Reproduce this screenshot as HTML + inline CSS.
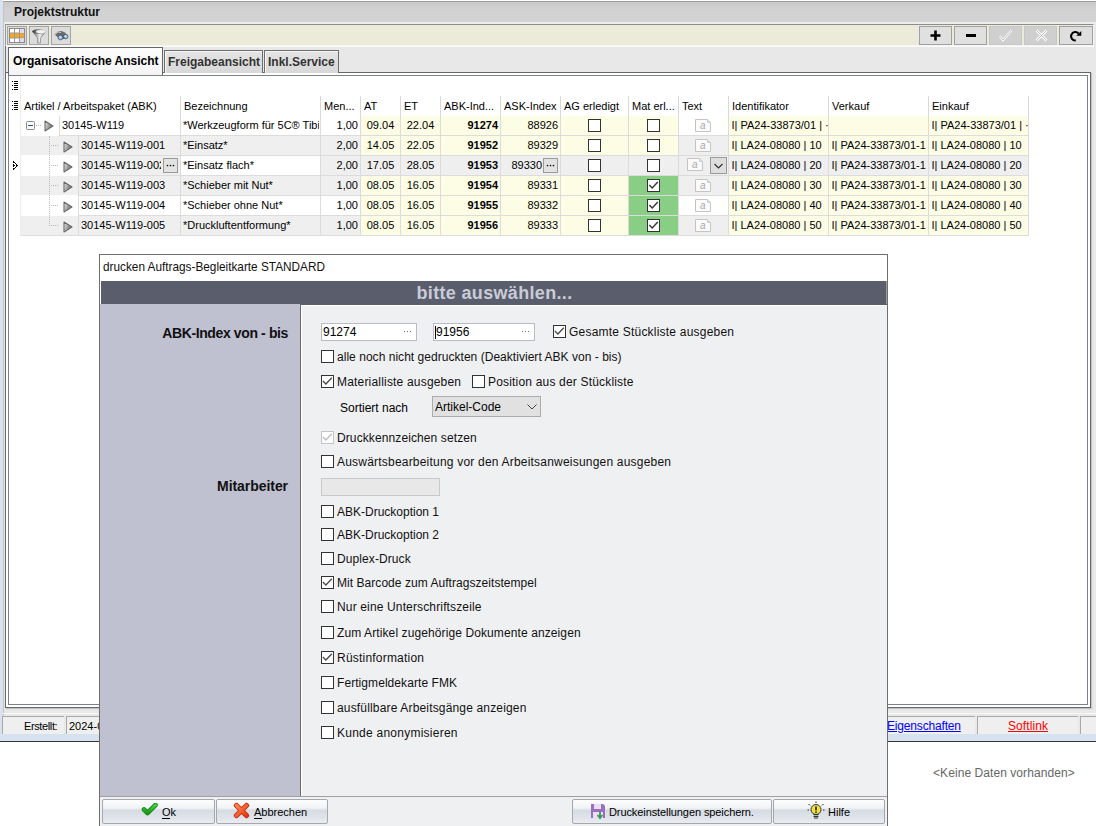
<!DOCTYPE html>
<html><head><meta charset="utf-8">
<style>
*{box-sizing:border-box;margin:0;padding:0}
html,body{width:1096px;height:826px;overflow:hidden;background:#fff;font-family:"Liberation Sans",sans-serif;color:#000;position:relative}
.a{position:absolute}
.t11{font-size:11px;line-height:13px;white-space:nowrap}
.t12{font-size:12px;line-height:14px;white-space:nowrap}
.b{font-weight:bold}
.vl{position:absolute;width:1px;background:#d9d9d9}
.hl{position:absolute;height:1px;background:#d9d9d9}
.cb{position:absolute;width:13px;height:13px;border:1px solid #333;background:#fff}
.cbk::after{content:"";position:absolute;left:3px;top:0px;width:4px;height:8px;border:solid #222;border-width:0 1.5px 1.5px 0;transform:rotate(45deg)}
.doc{position:absolute;width:16px;height:12px;border:1px solid #c8c8c8;background:#fff;font-size:9px;font-style:italic;color:#b0b0b0;text-align:center;line-height:10px}
</style></head><body>

<!-- left light strip -->
<div class="a" style="left:0;top:0;width:3px;height:741px;background:#d8e3ef"></div>
<!-- main window frame -->
<div class="a" style="left:3px;top:1px;width:1093px;height:733px;background:#e8e8e8;border-left:1px solid #c4c4c4;border-top:1px solid #9c9c9c"></div>
<!-- title bar -->
<div class="a" style="left:4px;top:2px;width:1092px;height:20px;background:linear-gradient(#c9c9c9,#d2d2d2 40%,#d2d2d2)"></div>
<div class="a t12 b" style="left:14px;top:5px;color:#111">Projektstruktur</div>
<div class="a" style="left:4px;top:22px;width:1092px;height:2px;background:#ededf0"></div>
<!-- toolbar -->
<div class="a" style="left:5px;top:24px;width:1089px;height:22px;background:#ecead9;border-top:1px solid #8c8c8c;border-left:1px solid #9a9a9a;border-right:1px solid #f4f4f4;border-bottom:1px solid #f6f6f6"></div>
<div class="a" style="left:7px;top:26px;width:20px;height:19px;background:#dcdcdc;border:1px solid #a4a4a4"></div>
<svg class="a" style="left:9px;top:28px" width="16" height="15" viewBox="0 0 16 15"><rect x="0.5" y="0.5" width="15" height="14" fill="#fff" stroke="#888"/><rect x="1" y="5" width="14" height="5" fill="#f5a623"/><path d="M5.5 0.5 V14.5 M10.5 0.5 V14.5 M0.5 5 H15.5 M0.5 10 H15.5" stroke="#999" stroke-width="1"/><rect x="11" y="1" width="4" height="4" fill="#e0dcf8"/><rect x="11" y="10.5" width="4" height="3.5" fill="#e0dcf8"/></svg>
<div class="a" style="left:29px;top:26px;width:20px;height:19px;background:#dcdcdc;border:1px solid #a4a4a4"></div>
<svg class="a" style="left:31px;top:28px" width="16" height="16" viewBox="0 0 16 16"><defs><linearGradient id="fgA" x1="0" y1="0" x2="1" y2="0"><stop offset="0" stop-color="#3a3a3a"/><stop offset="0.5" stop-color="#9a9a9a"/><stop offset="1" stop-color="#dcdcdc"/></linearGradient><linearGradient id="fgB" x1="0" y1="0" x2="1" y2="0"><stop offset="0" stop-color="#555"/><stop offset="0.55" stop-color="#f0f0f0"/><stop offset="1" stop-color="#6a6a6a"/></linearGradient></defs><path d="M1.5 3.5 L6.5 10 V15 H9.5 V10 L15 3.5 Z" fill="url(#fgB)" stroke="#777" stroke-width="0.6"/><ellipse cx="8.2" cy="3.5" rx="6.8" ry="2.5" fill="url(#fgA)"/><ellipse cx="9.6" cy="3.6" rx="4.6" ry="1.6" fill="#f2f2f2"/></svg>
<div class="a" style="left:51px;top:26px;width:20px;height:19px;background:#dcdcdc;border:1px solid #a4a4a4"></div>
<svg class="a" style="left:53px;top:29px" width="16" height="13" viewBox="0 0 16 13"><path d="M1.5 5.5 L5 2.5 L8.5 2 L12 3.5 L14.5 7 L12 10 L7 10 Z" fill="#6a6a6a"/><path d="M2 5.5 L5 3 L8 3.5" stroke="#c8c8c8" stroke-width="1" fill="none"/><circle cx="7.5" cy="8.5" r="2.4" fill="#8cc4f4" stroke="#444" stroke-width="0.7"/><circle cx="12.8" cy="7.6" r="2.2" fill="#8cc4f4" stroke="#444" stroke-width="0.7"/><circle cx="7" cy="8" r="0.8" fill="#e8f4ff"/><circle cx="12.3" cy="7.1" r="0.8" fill="#e8f4ff"/></svg>
<div class="a" style="left:919px;top:26px;width:33px;height:19px;background:#e0e0e0;border:1px solid #a0a0a0"></div>
<svg class="a" style="left:930px;top:30px" width="11" height="11" viewBox="0 0 11 11"><path d="M5.5 0.5 V10.5 M0.5 5.5 H10.5" stroke="#000" stroke-width="2.6"/></svg>
<div class="a" style="left:954px;top:26px;width:33px;height:19px;background:#e0e0e0;border:1px solid #a0a0a0"></div>
<div class="a" style="left:966px;top:34px;width:10px;height:3px;background:#000"></div>
<div class="a" style="left:989px;top:26px;width:33px;height:19px;background:#cfcfcf;border:1px solid #c6c6c6"></div>
<svg class="a" style="left:998px;top:29px" width="15" height="13" viewBox="0 0 15 13"><path d="M1.5 7 L5 11 L13.5 1.5" fill="none" stroke="#fff" stroke-width="2.4"/><path d="M1.5 7 L5 11 L13.5 1.5" fill="none" stroke="#bdbdbd" stroke-width="1"/></svg>
<div class="a" style="left:1024px;top:26px;width:33px;height:19px;background:#cfcfcf;border:1px solid #c6c6c6"></div>
<svg class="a" style="left:1035px;top:29px" width="13" height="13" viewBox="0 0 13 13"><path d="M1.5 1.5 L11.5 11.5 M11.5 1.5 L1.5 11.5" fill="none" stroke="#fff" stroke-width="2.6"/><path d="M1.5 1.5 L11.5 11.5 M11.5 1.5 L1.5 11.5" fill="none" stroke="#bdbdbd" stroke-width="1"/></svg>
<div class="a" style="left:1059px;top:26px;width:34px;height:19px;background:#dedede;border:1px solid #a0a0a0"></div>
<svg class="a" style="left:1070px;top:30px" width="13" height="12" viewBox="0 0 13 12"><path d="M5.8 10.4 A4.2 4.2 0 1 1 8.6 3.6" fill="none" stroke="#000" stroke-width="2.1"/><path d="M6.2 5.8 L11.3 5.8 L11.3 0.9 Z" fill="#000"/></svg>

<!-- tab strip -->
<div class="a" style="left:5px;top:46px;width:1089px;height:27px;background:#e8e8e8;border-top:1px solid #fafafa"></div>
<div class="a" style="left:5px;top:46px;width:1px;height:662px;background:#707070"></div>
<!-- content panel -->
<div class="a" style="left:5px;top:72px;width:1086px;height:636px;background:#fff;border:1px solid #666;box-shadow:1px 1px 1px rgba(0,0,0,0.15)"></div>
<div class="a" style="left:8px;top:75px;width:1080px;height:630px;background:#fff;border:1px solid #7a8290"></div>
<div class="a" style="left:8px;top:47px;width:155px;height:28px;background:linear-gradient(#fcfcfc,#f4f4f4);border:1px solid #666;border-bottom:none"></div>
<div class="a" style="left:5px;top:72px;width:3px;height:1px;background:#666"></div>
<div class="a t12 b" style="left:13px;top:54px">Organisatorische Ansicht</div>
<div class="a" style="left:164px;top:50px;width:99px;height:23px;background:linear-gradient(#e4e4e4,#d8d8d8);border:1px solid #6e6e6e;border-bottom:none;box-shadow:inset 1px 1px 0 #f6f6f6"></div>
<div class="a t12 b" style="left:168px;top:55px;color:#333">Freigabeansicht</div>
<div class="a" style="left:264px;top:50px;width:75px;height:23px;background:linear-gradient(#e4e4e4,#d8d8d8);border:1px solid #6e6e6e;border-bottom:none;box-shadow:inset 1px 1px 0 #f6f6f6"></div>
<div class="a t12 b" style="left:268px;top:55px;color:#333">Inkl.Service</div>

<!-- status bar -->
<div class="a" style="left:3px;top:713px;width:1093px;height:1px;background:#f8f8f8"></div>
<div class="a" style="left:2px;top:716px;width:62px;height:18px;background:#efefef;border-top:1px solid #aaa;border-left:1px solid #aaa"></div>
<div class="a t12" style="left:24px;top:719px;font-size:11px;letter-spacing:-0.38px">Erstellt:</div>
<div class="a" style="left:66px;top:716px;width:40px;height:18px;background:#efefef;border-top:1px solid #aaa;border-left:1px solid #aaa"></div>
<div class="a t12" style="left:69px;top:719px;font-size:11px">2024-0</div>
<div class="a" style="left:887px;top:716px;width:88px;height:18px;background:#efefef;border-top:1px solid #aaa"></div>
<div class="a t12" style="left:887px;top:719px;color:#0000ff;text-decoration:underline;letter-spacing:-0.17px">Eigenschaften</div>
<div class="a" style="left:977px;top:716px;width:101px;height:18px;background:#efefef;border-top:1px solid #aaa;border-left:1px solid #aaa"></div>
<div class="a t12" style="left:1008px;top:719px;color:#ff0000;text-decoration:underline;letter-spacing:0.09px">Softlink</div>
<div class="a" style="left:1080px;top:716px;width:16px;height:18px;background:#efefef;border-top:1px solid #aaa;border-left:1px solid #aaa"></div>
<div class="a" style="left:0;top:734px;width:1096px;height:7px;background:#d6e2ee"></div>
<div class="a" style="left:0;top:741px;width:1096px;height:1px;background:#333"></div>
<div class="a t12" style="left:933px;top:766px;color:#666;letter-spacing:0.07px">&lt;Keine Daten vorhanden&gt;</div>


<div class="vl" style="left:180px;top:96px;height:20px"></div>
<div class="vl" style="left:320px;top:96px;height:20px"></div>
<div class="vl" style="left:360px;top:96px;height:20px"></div>
<div class="vl" style="left:400px;top:96px;height:20px"></div>
<div class="vl" style="left:440px;top:96px;height:20px"></div>
<div class="vl" style="left:500px;top:96px;height:20px"></div>
<div class="vl" style="left:560px;top:96px;height:20px"></div>
<div class="vl" style="left:628px;top:96px;height:20px"></div>
<div class="vl" style="left:678px;top:96px;height:20px"></div>
<div class="vl" style="left:728px;top:96px;height:20px"></div>
<div class="vl" style="left:828px;top:96px;height:20px"></div>
<div class="vl" style="left:928px;top:96px;height:20px"></div>
<div class="vl" style="left:1028px;top:96px;height:20px"></div>
<div class="a" style="left:14px;top:81px;width:4px;height:1px;background:#000"></div><div class="a" style="left:14px;top:83px;width:4px;height:1px;background:#000"></div><div class="a" style="left:14px;top:85px;width:4px;height:1px;background:#000"></div><div class="a" style="left:14px;top:87px;width:4px;height:1px;background:#000"></div><div class="a" style="left:14px;top:89px;width:4px;height:1px;background:#000"></div><div class="a" style="left:12px;top:81px;width:1px;height:1px;background:#000"></div><div class="a" style="left:12px;top:85px;width:1px;height:1px;background:#000"></div><div class="a" style="left:12px;top:89px;width:1px;height:1px;background:#000"></div>
<div class="a" style="left:14px;top:101px;width:4px;height:1px;background:#000"></div><div class="a" style="left:14px;top:103px;width:4px;height:1px;background:#000"></div><div class="a" style="left:14px;top:105px;width:4px;height:1px;background:#000"></div><div class="a" style="left:14px;top:107px;width:4px;height:1px;background:#000"></div><div class="a" style="left:14px;top:109px;width:4px;height:1px;background:#000"></div><div class="a" style="left:12px;top:101px;width:1px;height:1px;background:#000"></div><div class="a" style="left:12px;top:105px;width:1px;height:1px;background:#000"></div><div class="a" style="left:12px;top:109px;width:1px;height:1px;background:#000"></div>
<div class="vl" style="left:20px;top:76px;height:160px;background:#ececec"></div>
<div class="a t11" style="left:24px;top:100px">Artikel / Arbeitspaket (ABK)</div>
<div class="a t11" style="left:184px;top:100px">Bezeichnung</div>
<div class="a t11" style="left:324px;top:100px">Men...</div>
<div class="a t11" style="left:364px;top:100px">AT</div>
<div class="a t11" style="left:404px;top:100px">ET</div>
<div class="a t11" style="left:444px;top:100px">ABK-Ind...</div>
<div class="a t11" style="left:504px;top:100px">ASK-Index</div>
<div class="a t11" style="left:564px;top:100px">AG erledigt</div>
<div class="a t11" style="left:632px;top:100px">Mat erl...</div>
<div class="a t11" style="left:682px;top:100px">Text</div>
<div class="a t11" style="left:732px;top:100px">Identifikator</div>
<div class="a t11" style="left:832px;top:100px">Verkauf</div>
<div class="a t11" style="left:932px;top:100px">Einkauf</div>
<div class="a" style="left:21px;top:116px;width:1007px;height:19px;background:#ffffff"></div>
<div class="a" style="left:361px;top:116px;width:199px;height:19px;background:#fdfde6"></div>
<div class="a" style="left:561px;top:116px;width:67px;height:19px;background:#fdfde6"></div>
<div class="a" style="left:629px;top:116px;width:49px;height:19px;background:#fdfde6"></div>
<div class="a" style="left:729px;top:116px;width:299px;height:19px;background:#fdfde6"></div>
<div class="hl" style="left:59px;top:135px;width:970px;background:#dcdcdc"></div>
<div class="vl" style="left:59px;top:116px;height:20px;background:#dcdcdc"></div>
<div class="vl" style="left:180px;top:116px;height:20px;background:#dcdcdc"></div>
<div class="vl" style="left:320px;top:116px;height:20px;background:#dcdcdc"></div>
<div class="vl" style="left:360px;top:116px;height:20px;background:#dcdcdc"></div>
<div class="vl" style="left:400px;top:116px;height:20px;background:#dcdcdc"></div>
<div class="vl" style="left:440px;top:116px;height:20px;background:#dcdcdc"></div>
<div class="vl" style="left:500px;top:116px;height:20px;background:#dcdcdc"></div>
<div class="vl" style="left:560px;top:116px;height:20px;background:#dcdcdc"></div>
<div class="vl" style="left:628px;top:116px;height:20px;background:#dcdcdc"></div>
<div class="vl" style="left:678px;top:116px;height:20px;background:#dcdcdc"></div>
<div class="vl" style="left:728px;top:116px;height:20px;background:#dcdcdc"></div>
<div class="vl" style="left:828px;top:116px;height:20px;background:#dcdcdc"></div>
<div class="vl" style="left:928px;top:116px;height:20px;background:#dcdcdc"></div>
<div class="vl" style="left:1028px;top:116px;height:20px;background:#dcdcdc"></div>
<div class="a" style="left:26px;top:121px;width:9px;height:9px;border:1px solid #8a8a8a;border-radius:1.5px;background:#fafafa"></div>
<div class="a" style="left:28px;top:125px;width:5px;height:1px;background:#3050a0"></div>
<div class="a" style="left:36px;top:125px;width:5px;height:1px;border-top:1px dotted #bbb"></div>
<svg class="a" style="left:44px;top:120px" width="10" height="12" viewBox="0 0 10 12"><defs><linearGradient id="tg" x1="0" y1="0" x2="1" y2="0.3"><stop offset="0" stop-color="#f4f4f4"/><stop offset="0.35" stop-color="#b8b8b8"/><stop offset="1" stop-color="#6a6a6a"/></linearGradient></defs><path d="M1 1 L9 6 L1 11 Z" fill="url(#tg)" stroke="#6a6a6a" stroke-width="1.1" stroke-linejoin="round"/></svg>
<div class="a t11" style="left:62px;top:119px">30145-W119</div>
<div class="a t11" style="left:183px;top:119px;width:136px;overflow:hidden">*Werkzeugform für 5C® Tibi</div>
<div class="a t11" style="left:321px;top:119px;width:37px;text-align:right">1,00</div>
<div class="a t11" style="left:361px;top:119px;width:39px;text-align:center">09.04</div>
<div class="a t11" style="left:401px;top:119px;width:39px;text-align:center">22.04</div>
<div class="a t11 b" style="left:441px;top:119px;width:57px;text-align:right">91274</div>
<div class="a t11" style="left:501px;top:119px;width:57px;text-align:right">88926</div>
<div class="cb" style="left:588px;top:119px"></div>
<div class="cb" style="left:647px;top:119px"></div>
<svg class="a" style="left:695px;top:119px" width="17" height="14" viewBox="0 0 17 14"><path d="M0.5 0.5 H12.5 L15.5 3.5 V12.5 H0.5 Z" fill="#fbfbfb" stroke="#c4c4c4" stroke-width="1"/><path d="M12.5 0.5 V3.5 H15.5" fill="#ddd" stroke="#c8c8c8" stroke-width="0.8"/><text x="7.8" y="10.3" font-family="Liberation Sans" font-style="italic" font-size="10" fill="#a8a8a8" text-anchor="middle">a</text></svg>
<div class="a t11" style="left:731.5px;top:119px;width:96px;overflow:hidden">I| PA24-33873/01 | ·</div>
<div class="a t11" style="left:831.5px;top:119px;width:96px;overflow:hidden"></div>
<div class="a t11" style="left:931.5px;top:119px;width:96px;overflow:hidden">I| PA24-33873/01 | ·</div>
<div class="a" style="left:21px;top:136px;width:1007px;height:19px;background:#efefef"></div>
<div class="a" style="left:361px;top:136px;width:199px;height:19px;background:#fdfde6"></div>
<div class="a" style="left:561px;top:136px;width:67px;height:19px;background:#fdfde6"></div>
<div class="a" style="left:629px;top:136px;width:49px;height:19px;background:#fdfde6"></div>
<div class="a" style="left:729px;top:136px;width:299px;height:19px;background:#fdfde6"></div>
<div class="hl" style="left:78px;top:155px;width:951px;background:#dcdcdc"></div>
<div class="vl" style="left:78px;top:136px;height:20px;background:#dcdcdc"></div>
<div class="vl" style="left:180px;top:136px;height:20px;background:#dcdcdc"></div>
<div class="vl" style="left:320px;top:136px;height:20px;background:#dcdcdc"></div>
<div class="vl" style="left:360px;top:136px;height:20px;background:#dcdcdc"></div>
<div class="vl" style="left:400px;top:136px;height:20px;background:#dcdcdc"></div>
<div class="vl" style="left:440px;top:136px;height:20px;background:#dcdcdc"></div>
<div class="vl" style="left:500px;top:136px;height:20px;background:#dcdcdc"></div>
<div class="vl" style="left:560px;top:136px;height:20px;background:#dcdcdc"></div>
<div class="vl" style="left:628px;top:136px;height:20px;background:#dcdcdc"></div>
<div class="vl" style="left:678px;top:136px;height:20px;background:#dcdcdc"></div>
<div class="vl" style="left:728px;top:136px;height:20px;background:#dcdcdc"></div>
<div class="vl" style="left:828px;top:136px;height:20px;background:#dcdcdc"></div>
<div class="vl" style="left:928px;top:136px;height:20px;background:#dcdcdc"></div>
<div class="vl" style="left:1028px;top:136px;height:20px;background:#dcdcdc"></div>
<div class="a" style="left:51px;top:145px;width:7px;height:1px;border-top:1px dotted #bbb"></div>
<svg class="a" style="left:63px;top:141px" width="10" height="12" viewBox="0 0 10 12"><defs><linearGradient id="tg" x1="0" y1="0" x2="1" y2="0.3"><stop offset="0" stop-color="#f4f4f4"/><stop offset="0.35" stop-color="#b8b8b8"/><stop offset="1" stop-color="#6a6a6a"/></linearGradient></defs><path d="M1 1 L9 6 L1 11 Z" fill="url(#tg)" stroke="#6a6a6a" stroke-width="1.1" stroke-linejoin="round"/></svg>
<div class="a t11" style="left:81px;top:139px">30145-W119-001</div>
<div class="a t11" style="left:183px;top:139px;width:136px;overflow:hidden">*Einsatz*</div>
<div class="a t11" style="left:321px;top:139px;width:37px;text-align:right">2,00</div>
<div class="a t11" style="left:361px;top:139px;width:39px;text-align:center">14.05</div>
<div class="a t11" style="left:401px;top:139px;width:39px;text-align:center">22.05</div>
<div class="a t11 b" style="left:441px;top:139px;width:57px;text-align:right">91952</div>
<div class="a t11" style="left:501px;top:139px;width:57px;text-align:right">89329</div>
<div class="cb" style="left:588px;top:139px"></div>
<div class="cb" style="left:647px;top:139px"></div>
<svg class="a" style="left:695px;top:139px" width="17" height="14" viewBox="0 0 17 14"><path d="M0.5 0.5 H12.5 L15.5 3.5 V12.5 H0.5 Z" fill="#fbfbfb" stroke="#c4c4c4" stroke-width="1"/><path d="M12.5 0.5 V3.5 H15.5" fill="#ddd" stroke="#c8c8c8" stroke-width="0.8"/><text x="7.8" y="10.3" font-family="Liberation Sans" font-style="italic" font-size="10" fill="#a8a8a8" text-anchor="middle">a</text></svg>
<div class="a t11" style="left:731.5px;top:139px;width:96px;overflow:hidden">I| LA24-08080 | 10</div>
<div class="a t11" style="left:831.5px;top:139px;width:96px;overflow:hidden">I| PA24-33873/01-1</div>
<div class="a t11" style="left:931.5px;top:139px;width:96px;overflow:hidden">I| LA24-08080 | 10</div>
<div class="a" style="left:21px;top:156px;width:1007px;height:19px;background:#efefef"></div>
<div class="a" style="left:181px;top:156px;width:139px;height:19px;background:#fff"></div>
<div class="a" style="left:21px;top:156px;width:57px;height:19px;background:#fff"></div>
<div class="hl" style="left:78px;top:175px;width:951px;background:#dcdcdc"></div>
<div class="vl" style="left:78px;top:156px;height:20px;background:#dcdcdc"></div>
<div class="vl" style="left:180px;top:156px;height:20px;background:#dcdcdc"></div>
<div class="vl" style="left:320px;top:156px;height:20px;background:#dcdcdc"></div>
<div class="vl" style="left:360px;top:156px;height:20px;background:#dcdcdc"></div>
<div class="vl" style="left:400px;top:156px;height:20px;background:#dcdcdc"></div>
<div class="vl" style="left:440px;top:156px;height:20px;background:#dcdcdc"></div>
<div class="vl" style="left:500px;top:156px;height:20px;background:#dcdcdc"></div>
<div class="vl" style="left:560px;top:156px;height:20px;background:#dcdcdc"></div>
<div class="vl" style="left:628px;top:156px;height:20px;background:#dcdcdc"></div>
<div class="vl" style="left:678px;top:156px;height:20px;background:#dcdcdc"></div>
<div class="vl" style="left:728px;top:156px;height:20px;background:#dcdcdc"></div>
<div class="vl" style="left:828px;top:156px;height:20px;background:#dcdcdc"></div>
<div class="vl" style="left:928px;top:156px;height:20px;background:#dcdcdc"></div>
<div class="vl" style="left:1028px;top:156px;height:20px;background:#dcdcdc"></div>
<div class="a" style="left:51px;top:165px;width:7px;height:1px;border-top:1px dotted #bbb"></div>
<svg class="a" style="left:63px;top:161px" width="10" height="12" viewBox="0 0 10 12"><defs><linearGradient id="tg" x1="0" y1="0" x2="1" y2="0.3"><stop offset="0" stop-color="#f4f4f4"/><stop offset="0.35" stop-color="#b8b8b8"/><stop offset="1" stop-color="#6a6a6a"/></linearGradient></defs><path d="M1 1 L9 6 L1 11 Z" fill="url(#tg)" stroke="#6a6a6a" stroke-width="1.1" stroke-linejoin="round"/></svg>
<div class="a t11" style="left:81px;top:159px;width:80px;overflow:hidden">30145-W119-002</div>
<div class="a" style="left:163px;top:158px;width:15px;height:15px;background:#e2e2e2;border:1px solid #9a9a9a"></div><svg class="a" style="left:163px;top:158px" width="15" height="15"><circle cx="4.5" cy="7.5" r="0.85" fill="#111"/><circle cx="7.5" cy="7.5" r="0.85" fill="#111"/><circle cx="10.5" cy="7.5" r="0.85" fill="#111"/></svg>
<div class="a t11" style="left:183px;top:159px;width:136px;overflow:hidden">*Einsatz flach*</div>
<div class="a t11" style="left:321px;top:159px;width:37px;text-align:right">2,00</div>
<div class="a t11" style="left:361px;top:159px;width:39px;text-align:center">17.05</div>
<div class="a t11" style="left:401px;top:159px;width:39px;text-align:center">28.05</div>
<div class="a t11 b" style="left:441px;top:159px;width:57px;text-align:right">91953</div>
<div class="a t11" style="left:501px;top:159px;width:41px;text-align:right">89330</div>
<div class="a" style="left:543px;top:158px;width:15px;height:15px;background:#e2e2e2;border:1px solid #9a9a9a"></div><svg class="a" style="left:543px;top:158px" width="15" height="15"><circle cx="4.5" cy="7.5" r="0.85" fill="#111"/><circle cx="7.5" cy="7.5" r="0.85" fill="#111"/><circle cx="10.5" cy="7.5" r="0.85" fill="#111"/></svg>
<div class="cb" style="left:588px;top:159px"></div>
<div class="cb" style="left:647px;top:159px"></div>
<svg class="a" style="left:687px;top:158px" width="17" height="14" viewBox="0 0 17 14"><path d="M0.5 0.5 H12.5 L15.5 3.5 V12.5 H0.5 Z" fill="#fbfbfb" stroke="#c4c4c4" stroke-width="1"/><path d="M12.5 0.5 V3.5 H15.5" fill="#ddd" stroke="#c8c8c8" stroke-width="0.8"/><text x="7.8" y="10.3" font-family="Liberation Sans" font-style="italic" font-size="10" fill="#a8a8a8" text-anchor="middle">a</text></svg>
<div class="a" style="left:710px;top:157px;width:17px;height:17px;background:#dedede;border:1px solid #9a9a9a"></div>
<svg class="a" style="left:713px;top:163px" width="11" height="7" viewBox="0 0 11 7"><path d="M1.5 1 L5.5 5 L9.5 1" fill="none" stroke="#333" stroke-width="1.2"/></svg>
<div class="a t11" style="left:731.5px;top:159px;width:96px;overflow:hidden">I| LA24-08080 | 20</div>
<div class="a t11" style="left:831.5px;top:159px;width:96px;overflow:hidden">I| PA24-33873/01-1</div>
<div class="a t11" style="left:931.5px;top:159px;width:96px;overflow:hidden">I| LA24-08080 | 20</div>
<div class="a" style="left:21px;top:176px;width:1007px;height:19px;background:#efefef"></div>
<div class="a" style="left:361px;top:176px;width:199px;height:19px;background:#fdfde6"></div>
<div class="a" style="left:561px;top:176px;width:67px;height:19px;background:#fdfde6"></div>
<div class="a" style="left:629px;top:176px;width:49px;height:19px;background:#fdfde6"></div>
<div class="a" style="left:729px;top:176px;width:299px;height:19px;background:#fdfde6"></div>
<div class="a" style="left:629px;top:176px;width:49px;height:20px;background:#88ce85"></div>
<div class="hl" style="left:78px;top:195px;width:951px;background:#dcdcdc"></div>
<div class="vl" style="left:78px;top:176px;height:20px;background:#dcdcdc"></div>
<div class="vl" style="left:180px;top:176px;height:20px;background:#dcdcdc"></div>
<div class="vl" style="left:320px;top:176px;height:20px;background:#dcdcdc"></div>
<div class="vl" style="left:360px;top:176px;height:20px;background:#dcdcdc"></div>
<div class="vl" style="left:400px;top:176px;height:20px;background:#dcdcdc"></div>
<div class="vl" style="left:440px;top:176px;height:20px;background:#dcdcdc"></div>
<div class="vl" style="left:500px;top:176px;height:20px;background:#dcdcdc"></div>
<div class="vl" style="left:560px;top:176px;height:20px;background:#dcdcdc"></div>
<div class="vl" style="left:628px;top:176px;height:20px;background:#dcdcdc"></div>
<div class="vl" style="left:678px;top:176px;height:20px;background:#dcdcdc"></div>
<div class="vl" style="left:728px;top:176px;height:20px;background:#dcdcdc"></div>
<div class="vl" style="left:828px;top:176px;height:20px;background:#dcdcdc"></div>
<div class="vl" style="left:928px;top:176px;height:20px;background:#dcdcdc"></div>
<div class="vl" style="left:1028px;top:176px;height:20px;background:#dcdcdc"></div>
<div class="a" style="left:51px;top:185px;width:7px;height:1px;border-top:1px dotted #bbb"></div>
<svg class="a" style="left:63px;top:181px" width="10" height="12" viewBox="0 0 10 12"><defs><linearGradient id="tg" x1="0" y1="0" x2="1" y2="0.3"><stop offset="0" stop-color="#f4f4f4"/><stop offset="0.35" stop-color="#b8b8b8"/><stop offset="1" stop-color="#6a6a6a"/></linearGradient></defs><path d="M1 1 L9 6 L1 11 Z" fill="url(#tg)" stroke="#6a6a6a" stroke-width="1.1" stroke-linejoin="round"/></svg>
<div class="a t11" style="left:81px;top:179px">30145-W119-003</div>
<div class="a t11" style="left:183px;top:179px;width:136px;overflow:hidden">*Schieber mit Nut*</div>
<div class="a t11" style="left:321px;top:179px;width:37px;text-align:right">1,00</div>
<div class="a t11" style="left:361px;top:179px;width:39px;text-align:center">08.05</div>
<div class="a t11" style="left:401px;top:179px;width:39px;text-align:center">16.05</div>
<div class="a t11 b" style="left:441px;top:179px;width:57px;text-align:right">91954</div>
<div class="a t11" style="left:501px;top:179px;width:57px;text-align:right">89331</div>
<div class="cb" style="left:588px;top:179px"></div>
<div class="cb" style="left:647px;top:179px"></div>
<svg class="a" style="left:647px;top:179px" width="13" height="13" viewBox="0 0 13 13"><path d="M2.4 6 L5.2 9 L10.8 3" fill="none" stroke="#333" stroke-width="1.35"/></svg>
<svg class="a" style="left:695px;top:179px" width="17" height="14" viewBox="0 0 17 14"><path d="M0.5 0.5 H12.5 L15.5 3.5 V12.5 H0.5 Z" fill="#fbfbfb" stroke="#c4c4c4" stroke-width="1"/><path d="M12.5 0.5 V3.5 H15.5" fill="#ddd" stroke="#c8c8c8" stroke-width="0.8"/><text x="7.8" y="10.3" font-family="Liberation Sans" font-style="italic" font-size="10" fill="#a8a8a8" text-anchor="middle">a</text></svg>
<div class="a t11" style="left:731.5px;top:179px;width:96px;overflow:hidden">I| LA24-08080 | 30</div>
<div class="a t11" style="left:831.5px;top:179px;width:96px;overflow:hidden">I| PA24-33873/01-1</div>
<div class="a t11" style="left:931.5px;top:179px;width:96px;overflow:hidden">I| LA24-08080 | 30</div>
<div class="a" style="left:21px;top:196px;width:1007px;height:19px;background:#ffffff"></div>
<div class="a" style="left:361px;top:196px;width:199px;height:19px;background:#fdfde6"></div>
<div class="a" style="left:561px;top:196px;width:67px;height:19px;background:#fdfde6"></div>
<div class="a" style="left:629px;top:196px;width:49px;height:19px;background:#fdfde6"></div>
<div class="a" style="left:729px;top:196px;width:299px;height:19px;background:#fdfde6"></div>
<div class="a" style="left:629px;top:196px;width:49px;height:20px;background:#88ce85"></div>
<div class="hl" style="left:78px;top:215px;width:951px;background:#dcdcdc"></div>
<div class="vl" style="left:78px;top:196px;height:20px;background:#dcdcdc"></div>
<div class="vl" style="left:180px;top:196px;height:20px;background:#dcdcdc"></div>
<div class="vl" style="left:320px;top:196px;height:20px;background:#dcdcdc"></div>
<div class="vl" style="left:360px;top:196px;height:20px;background:#dcdcdc"></div>
<div class="vl" style="left:400px;top:196px;height:20px;background:#dcdcdc"></div>
<div class="vl" style="left:440px;top:196px;height:20px;background:#dcdcdc"></div>
<div class="vl" style="left:500px;top:196px;height:20px;background:#dcdcdc"></div>
<div class="vl" style="left:560px;top:196px;height:20px;background:#dcdcdc"></div>
<div class="vl" style="left:628px;top:196px;height:20px;background:#dcdcdc"></div>
<div class="vl" style="left:678px;top:196px;height:20px;background:#dcdcdc"></div>
<div class="vl" style="left:728px;top:196px;height:20px;background:#dcdcdc"></div>
<div class="vl" style="left:828px;top:196px;height:20px;background:#dcdcdc"></div>
<div class="vl" style="left:928px;top:196px;height:20px;background:#dcdcdc"></div>
<div class="vl" style="left:1028px;top:196px;height:20px;background:#dcdcdc"></div>
<div class="a" style="left:51px;top:205px;width:7px;height:1px;border-top:1px dotted #bbb"></div>
<svg class="a" style="left:63px;top:201px" width="10" height="12" viewBox="0 0 10 12"><defs><linearGradient id="tg" x1="0" y1="0" x2="1" y2="0.3"><stop offset="0" stop-color="#f4f4f4"/><stop offset="0.35" stop-color="#b8b8b8"/><stop offset="1" stop-color="#6a6a6a"/></linearGradient></defs><path d="M1 1 L9 6 L1 11 Z" fill="url(#tg)" stroke="#6a6a6a" stroke-width="1.1" stroke-linejoin="round"/></svg>
<div class="a t11" style="left:81px;top:199px">30145-W119-004</div>
<div class="a t11" style="left:183px;top:199px;width:136px;overflow:hidden">*Schieber ohne Nut*</div>
<div class="a t11" style="left:321px;top:199px;width:37px;text-align:right">1,00</div>
<div class="a t11" style="left:361px;top:199px;width:39px;text-align:center">08.05</div>
<div class="a t11" style="left:401px;top:199px;width:39px;text-align:center">16.05</div>
<div class="a t11 b" style="left:441px;top:199px;width:57px;text-align:right">91955</div>
<div class="a t11" style="left:501px;top:199px;width:57px;text-align:right">89332</div>
<div class="cb" style="left:588px;top:199px"></div>
<div class="cb" style="left:647px;top:199px"></div>
<svg class="a" style="left:647px;top:199px" width="13" height="13" viewBox="0 0 13 13"><path d="M2.4 6 L5.2 9 L10.8 3" fill="none" stroke="#333" stroke-width="1.35"/></svg>
<svg class="a" style="left:695px;top:199px" width="17" height="14" viewBox="0 0 17 14"><path d="M0.5 0.5 H12.5 L15.5 3.5 V12.5 H0.5 Z" fill="#fbfbfb" stroke="#c4c4c4" stroke-width="1"/><path d="M12.5 0.5 V3.5 H15.5" fill="#ddd" stroke="#c8c8c8" stroke-width="0.8"/><text x="7.8" y="10.3" font-family="Liberation Sans" font-style="italic" font-size="10" fill="#a8a8a8" text-anchor="middle">a</text></svg>
<div class="a t11" style="left:731.5px;top:199px;width:96px;overflow:hidden">I| LA24-08080 | 40</div>
<div class="a t11" style="left:831.5px;top:199px;width:96px;overflow:hidden">I| PA24-33873/01-1</div>
<div class="a t11" style="left:931.5px;top:199px;width:96px;overflow:hidden">I| LA24-08080 | 40</div>
<div class="a" style="left:21px;top:216px;width:1007px;height:19px;background:#efefef"></div>
<div class="a" style="left:361px;top:216px;width:199px;height:19px;background:#fdfde6"></div>
<div class="a" style="left:561px;top:216px;width:67px;height:19px;background:#fdfde6"></div>
<div class="a" style="left:629px;top:216px;width:49px;height:19px;background:#fdfde6"></div>
<div class="a" style="left:729px;top:216px;width:299px;height:19px;background:#fdfde6"></div>
<div class="a" style="left:629px;top:216px;width:49px;height:20px;background:#88ce85"></div>
<div class="hl" style="left:78px;top:235px;width:951px;background:#dcdcdc"></div>
<div class="vl" style="left:78px;top:216px;height:20px;background:#dcdcdc"></div>
<div class="vl" style="left:180px;top:216px;height:20px;background:#dcdcdc"></div>
<div class="vl" style="left:320px;top:216px;height:20px;background:#dcdcdc"></div>
<div class="vl" style="left:360px;top:216px;height:20px;background:#dcdcdc"></div>
<div class="vl" style="left:400px;top:216px;height:20px;background:#dcdcdc"></div>
<div class="vl" style="left:440px;top:216px;height:20px;background:#dcdcdc"></div>
<div class="vl" style="left:500px;top:216px;height:20px;background:#dcdcdc"></div>
<div class="vl" style="left:560px;top:216px;height:20px;background:#dcdcdc"></div>
<div class="vl" style="left:628px;top:216px;height:20px;background:#dcdcdc"></div>
<div class="vl" style="left:678px;top:216px;height:20px;background:#dcdcdc"></div>
<div class="vl" style="left:728px;top:216px;height:20px;background:#dcdcdc"></div>
<div class="vl" style="left:828px;top:216px;height:20px;background:#dcdcdc"></div>
<div class="vl" style="left:928px;top:216px;height:20px;background:#dcdcdc"></div>
<div class="vl" style="left:1028px;top:216px;height:20px;background:#dcdcdc"></div>
<div class="a" style="left:51px;top:225px;width:7px;height:1px;border-top:1px dotted #bbb"></div>
<svg class="a" style="left:63px;top:221px" width="10" height="12" viewBox="0 0 10 12"><defs><linearGradient id="tg" x1="0" y1="0" x2="1" y2="0.3"><stop offset="0" stop-color="#f4f4f4"/><stop offset="0.35" stop-color="#b8b8b8"/><stop offset="1" stop-color="#6a6a6a"/></linearGradient></defs><path d="M1 1 L9 6 L1 11 Z" fill="url(#tg)" stroke="#6a6a6a" stroke-width="1.1" stroke-linejoin="round"/></svg>
<div class="a t11" style="left:81px;top:219px">30145-W119-005</div>
<div class="a t11" style="left:183px;top:219px;width:136px;overflow:hidden">*Druckluftentformung*</div>
<div class="a t11" style="left:321px;top:219px;width:37px;text-align:right">1,00</div>
<div class="a t11" style="left:361px;top:219px;width:39px;text-align:center">08.05</div>
<div class="a t11" style="left:401px;top:219px;width:39px;text-align:center">16.05</div>
<div class="a t11 b" style="left:441px;top:219px;width:57px;text-align:right">91956</div>
<div class="a t11" style="left:501px;top:219px;width:57px;text-align:right">89333</div>
<div class="cb" style="left:588px;top:219px"></div>
<div class="cb" style="left:647px;top:219px"></div>
<svg class="a" style="left:647px;top:219px" width="13" height="13" viewBox="0 0 13 13"><path d="M2.4 6 L5.2 9 L10.8 3" fill="none" stroke="#333" stroke-width="1.35"/></svg>
<svg class="a" style="left:695px;top:219px" width="17" height="14" viewBox="0 0 17 14"><path d="M0.5 0.5 H12.5 L15.5 3.5 V12.5 H0.5 Z" fill="#fbfbfb" stroke="#c4c4c4" stroke-width="1"/><path d="M12.5 0.5 V3.5 H15.5" fill="#ddd" stroke="#c8c8c8" stroke-width="0.8"/><text x="7.8" y="10.3" font-family="Liberation Sans" font-style="italic" font-size="10" fill="#a8a8a8" text-anchor="middle">a</text></svg>
<div class="a t11" style="left:731.5px;top:219px;width:96px;overflow:hidden">I| LA24-08080 | 50</div>
<div class="a t11" style="left:831.5px;top:219px;width:96px;overflow:hidden">I| PA24-33873/01-1</div>
<div class="a t11" style="left:931.5px;top:219px;width:96px;overflow:hidden">I| LA24-08080 | 50</div>
<div class="hl" style="left:21px;top:235px;width:1008px;background:#dcdcdc"></div>
<div class="a" style="left:49px;top:136px;width:1px;height:90px;border-left:1px dotted #bbb"></div>
<div class="a" style="left:13px;top:161px;width:1px;height:2px;background:#000"></div><div class="a" style="left:14px;top:162px;width:1px;height:1px;background:#000"></div><div class="a" style="left:15px;top:163px;width:1px;height:1px;background:#000"></div><div class="a" style="left:13px;top:164px;width:1px;height:3px;background:#000"></div><div class="a" style="left:14px;top:165px;width:1px;height:1px;background:#000"></div><div class="a" style="left:16px;top:164px;width:1px;height:3px;background:#000"></div><div class="a" style="left:17px;top:165px;width:1px;height:1px;background:#000"></div><div class="a" style="left:15px;top:167px;width:1px;height:1px;background:#000"></div><div class="a" style="left:13px;top:168px;width:1px;height:2px;background:#000"></div><div class="a" style="left:14px;top:168px;width:1px;height:1px;background:#000"></div>
<div class="a" style="left:99px;top:254px;width:789px;height:580px;background:#fff;border:1px solid #6e6e6e"></div>
<div class="a" style="left:103px;top:259px;font-size:13px;line-height:16px;white-space:nowrap;color:#111;transform:scaleX(0.907);transform-origin:0 0">drucken Auftrags-Begleitkarte STANDARD</div>
<div class="a" style="left:101px;top:281px;width:786px;height:23px;background:#5a5d6b;border-right:1px solid #9a9aa2"></div>
<div class="a b" style="left:101px;top:283px;width:786px;text-align:center;font-size:18px;line-height:20px;color:#c9ccd8;letter-spacing:0.33px;padding-left:1px">bitte auswählen...</div>
<div class="a" style="left:100px;top:304px;width:200px;height:492px;background:#bfc0d0"></div>
<div class="a" style="left:300px;top:304px;width:1px;height:492px;background:#6a6a6a"></div>
<div class="a" style="left:301px;top:304px;width:586px;height:492px;background:#eff0f2;border-top:1px solid #5a5d6b;box-shadow:inset 1px 1px 0 #fff"></div>
<div class="a" style="left:100px;top:796px;width:787px;height:1px;background:#a0a0a0"></div>
<div class="a" style="left:100px;top:797px;width:787px;height:30px;background:#eff0f2"></div>
<div class="a b" style="left:101px;top:325px;width:187px;text-align:right;font-size:14px;line-height:16px;color:#111;letter-spacing:-0.38px">ABK-Index von - bis</div>
<div class="a b" style="left:101px;top:478px;width:187px;text-align:right;font-size:14px;line-height:16px;color:#111;letter-spacing:-0.06px">Mitarbeiter</div>
<div class="a" style="left:321px;top:323px;width:96px;height:18px;background:#fff;border:1px solid #b8bcc4"></div>
<div class="a t12" style="left:323px;top:325px">91274</div>
<div class="a" style="left:404px;top:331px;width:1px;height:1px;background:#6a6a6a"></div><div class="a" style="left:407px;top:331px;width:1px;height:1px;background:#6a6a6a"></div><div class="a" style="left:410px;top:331px;width:1px;height:1px;background:#6a6a6a"></div>
<div class="a" style="left:433px;top:323px;width:102px;height:18px;background:#fff;border:1px solid #b8bcc4"></div>
<div class="a t12" style="left:436px;top:325px">91956</div>
<div class="a" style="left:435px;top:326px;width:1px;height:13px;background:#000"></div>
<div class="a" style="left:522px;top:331px;width:1px;height:1px;background:#6a6a6a"></div><div class="a" style="left:525px;top:331px;width:1px;height:1px;background:#6a6a6a"></div><div class="a" style="left:528px;top:331px;width:1px;height:1px;background:#6a6a6a"></div>
<div class="a" style="left:432px;top:396px;width:109px;height:21px;background:#e1e1e1;border:1px solid #adadad"></div>
<div class="a t12" style="left:435px;top:400px">Artikel-Code</div>
<svg class="a" style="left:527px;top:404px" width="10" height="6" viewBox="0 0 10 6"><path d="M0.5 0.5 L5 5 L9.5 0.5" fill="none" stroke="#444" stroke-width="1"/></svg>
<div class="a t12" style="left:340px;top:401px">Sortiert nach</div>
<div class="a" style="left:321px;top:478px;width:119px;height:18px;background:#e8e8e8;border:1px solid #c8c8c8"></div>
<div class="a" style="left:321px;top:350px;width:13px;height:13px;border:1px solid #333;background:#fff"></div>
<div class="a t12" style="left:337px;top:350px;letter-spacing:0.034px;color:#111">alle noch nicht gedruckten (Deaktiviert ABK von - bis)</div>
<div class="a" style="left:321px;top:375px;width:13px;height:13px;border:1px solid #333;background:#fff"></div>
<svg class="a" style="left:321px;top:375px" width="13" height="13" viewBox="0 0 13 13"><path d="M1.9 6 L4.9 9 L10.8 2.8" fill="none" stroke="#4a4a4a" stroke-width="1.3"/></svg>
<div class="a t12" style="left:337px;top:375px;letter-spacing:0.187px;color:#111">Materialliste ausgeben</div>
<div class="a" style="left:472px;top:375px;width:13px;height:13px;border:1px solid #333;background:#fff"></div>
<div class="a t12" style="left:488px;top:375px;letter-spacing:0.183px;color:#111">Position aus der Stückliste</div>
<div class="a" style="left:321px;top:431px;width:13px;height:13px;border:1px solid #c4c4c4;background:#fff"></div>
<svg class="a" style="left:321px;top:431px" width="13" height="13" viewBox="0 0 13 13"><path d="M1.9 6 L4.9 9 L10.8 2.8" fill="none" stroke="#bdbdbd" stroke-width="1.3"/></svg>
<div class="a t12" style="left:337px;top:431px;letter-spacing:0.104px;color:#111">Druckkennzeichen setzen</div>
<div class="a" style="left:321px;top:455px;width:13px;height:13px;border:1px solid #333;background:#fff"></div>
<div class="a t12" style="left:337px;top:455px;letter-spacing:0.206px;color:#111">Auswärtsbearbeitung vor den Arbeitsanweisungen ausgeben</div>
<div class="a" style="left:321px;top:505px;width:13px;height:13px;border:1px solid #333;background:#fff"></div>
<div class="a t12" style="left:337px;top:505px;letter-spacing:-0.003px;color:#111">ABK-Druckoption 1</div>
<div class="a" style="left:321px;top:528px;width:13px;height:13px;border:1px solid #333;background:#fff"></div>
<div class="a t12" style="left:337px;top:528px;letter-spacing:-0.003px;color:#111">ABK-Druckoption 2</div>
<div class="a" style="left:321px;top:552px;width:13px;height:13px;border:1px solid #333;background:#fff"></div>
<div class="a t12" style="left:337px;top:552px;letter-spacing:0.092px;color:#111">Duplex-Druck</div>
<div class="a" style="left:321px;top:576px;width:13px;height:13px;border:1px solid #333;background:#fff"></div>
<svg class="a" style="left:321px;top:576px" width="13" height="13" viewBox="0 0 13 13"><path d="M1.9 6 L4.9 9 L10.8 2.8" fill="none" stroke="#4a4a4a" stroke-width="1.3"/></svg>
<div class="a t12" style="left:337px;top:576px;letter-spacing:0.047px;color:#111">Mit Barcode zum Auftragszeitstempel</div>
<div class="a" style="left:321px;top:600px;width:13px;height:13px;border:1px solid #333;background:#fff"></div>
<div class="a t12" style="left:337px;top:600px;letter-spacing:0.145px;color:#111">Nur eine Unterschriftszeile</div>
<div class="a" style="left:321px;top:626px;width:13px;height:13px;border:1px solid #333;background:#fff"></div>
<div class="a t12" style="left:337px;top:626px;letter-spacing:0.103px;color:#111">Zum Artikel zugehörige Dokumente anzeigen</div>
<div class="a" style="left:321px;top:651px;width:13px;height:13px;border:1px solid #333;background:#fff"></div>
<svg class="a" style="left:321px;top:651px" width="13" height="13" viewBox="0 0 13 13"><path d="M1.9 6 L4.9 9 L10.8 2.8" fill="none" stroke="#4a4a4a" stroke-width="1.3"/></svg>
<div class="a t12" style="left:337px;top:651px;letter-spacing:0.211px;color:#111">Rüstinformation</div>
<div class="a" style="left:321px;top:676px;width:13px;height:13px;border:1px solid #333;background:#fff"></div>
<div class="a t12" style="left:337px;top:676px;letter-spacing:0.068px;color:#111">Fertigmeldekarte FMK</div>
<div class="a" style="left:321px;top:701px;width:13px;height:13px;border:1px solid #333;background:#fff"></div>
<div class="a t12" style="left:337px;top:701px;letter-spacing:0.164px;color:#111">ausfüllbare Arbeitsgänge anzeigen</div>
<div class="a" style="left:321px;top:726px;width:13px;height:13px;border:1px solid #333;background:#fff"></div>
<div class="a t12" style="left:337px;top:726px;letter-spacing:0.246px;color:#111">Kunde anonymisieren</div>
<div class="a" style="left:553px;top:325px;width:13px;height:13px;border:1px solid #333;background:#fff"></div>
<svg class="a" style="left:553px;top:325px" width="13" height="13" viewBox="0 0 13 13"><path d="M1.9 6 L4.9 9 L10.8 2.8" fill="none" stroke="#4a4a4a" stroke-width="1.3"/></svg>
<div class="a t12" style="left:569px;top:325px;letter-spacing:0.215px;color:#111">Gesamte Stückliste ausgeben</div>
<div class="a" style="left:102px;top:799px;width:113px;height:25px;border:1px solid #a4a8ae;border-radius:2px;background:linear-gradient(#fdfdfe 0%,#f1f3f5 35%,#d6dce4 45%,#dfe3e9 75%,#e9ecf0 100%)"></div>
<svg class="a" style="left:141px;top:803px" width="17" height="13" viewBox="0 0 17 13"><defs><linearGradient id="gk" x1="0" y1="0" x2="0" y2="1"><stop offset="0" stop-color="#48d048"/><stop offset="1" stop-color="#1a9a1a"/></linearGradient></defs><path d="M3 6.5 L6.5 10 L14.5 2" fill="none" stroke="#148a14" stroke-width="4.6" stroke-linecap="round" stroke-linejoin="round"/><path d="M3 6.5 L6.5 10 L14.5 2" fill="none" stroke="url(#gk)" stroke-width="3" stroke-linecap="round" stroke-linejoin="round"/></svg><div class="a t11" style="left:162px;top:806px">Ok</div><div class="a" style="left:162px;top:818px;width:8px;height:1px;background:#000"></div>
<div class="a" style="left:216px;top:799px;width:112px;height:25px;border:1px solid #a4a8ae;border-radius:2px;background:linear-gradient(#fdfdfe 0%,#f1f3f5 35%,#d6dce4 45%,#dfe3e9 75%,#e9ecf0 100%)"></div>
<svg class="a" style="left:233px;top:802px" width="17" height="17" viewBox="0 0 17 17"><defs><linearGradient id="gx" x1="0" y1="0" x2="1" y2="1"><stop offset="0" stop-color="#ff8a50"/><stop offset="1" stop-color="#e83a10"/></linearGradient></defs><path d="M3.5 3.5 L13.5 13.5 M13.5 3.5 L3.5 13.5" fill="none" stroke="#c42810" stroke-width="5.2" stroke-linecap="round"/><path d="M3.5 3.5 L13.5 13.5 M13.5 3.5 L3.5 13.5" fill="none" stroke="url(#gx)" stroke-width="3.4" stroke-linecap="round"/></svg><div class="a t11" style="left:254px;top:806px">Abbrechen</div><div class="a" style="left:254px;top:818px;width:8px;height:1px;background:#000"></div>
<div class="a" style="left:572px;top:799px;width:200px;height:25px;border:1px solid #a4a8ae;border-radius:2px;background:linear-gradient(#fdfdfe 0%,#f1f3f5 35%,#d6dce4 45%,#dfe3e9 75%,#e9ecf0 100%)"></div>
<svg class="a" style="left:590px;top:803px" width="16" height="17" viewBox="0 0 16 17"><path d="M1 1 H13 L15 3 V15 H1 Z" fill="#9b6fc0"/><rect x="4" y="1" width="7" height="5" fill="#e8e0f0"/><rect x="3" y="9" width="10" height="6" fill="#e8e0f0"/><path d="M10 9 V14 M7.5 12 L10 15 L12.5 12" stroke="#3a9a5a" stroke-width="1.8" fill="none"/></svg><div class="a t11" style="left:609px;top:806px;letter-spacing:-0.09px">Druckeinstellungen speichern.</div>
<div class="a" style="left:773px;top:799px;width:112px;height:25px;border:1px solid #a4a8ae;border-radius:2px;background:linear-gradient(#fdfdfe 0%,#f1f3f5 35%,#d6dce4 45%,#dfe3e9 75%,#e9ecf0 100%)"></div>
<svg class="a" style="left:807px;top:801px" width="18" height="19" viewBox="0 0 18 19"><path d="M9 0.5 V2 M1.5 3 L3 4.5 M16.5 3 L15 4.5 M0.5 9 H2 M16 9 H17.5" stroke="#333" stroke-width="1"/><circle cx="9" cy="8.5" r="5" fill="#f2e03a" stroke="#333" stroke-width="1"/><rect x="8.2" y="5.5" width="1.6" height="4" fill="#222"/><rect x="8.2" y="10.5" width="1.6" height="1.4" fill="#222"/><path d="M6.5 13.5 H11.5 M6.5 15.3 H11.5 M7 17 H11" stroke="#333" stroke-width="1.2"/></svg><div class="a t11" style="left:828px;top:806px">Hilfe</div>
</body></html>
